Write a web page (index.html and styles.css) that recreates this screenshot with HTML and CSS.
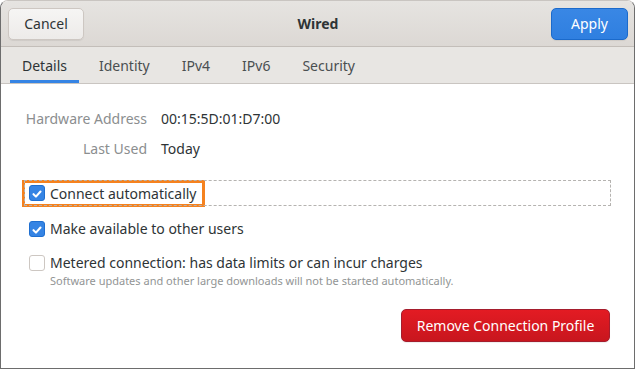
FILE: index.html
```html
<!DOCTYPE html>
<html lang="en">
<head>
  <meta charset="UTF-8" />
  <title>Wired</title>
  <link rel="stylesheet" href="styles.css">
</head>
<body>
  <div class="window">
    <div class="headerbar">
      <button class="btn">Cancel</button>
      <div class="title">Wired</div>
      <button class="btn btn-blue">Apply</button>
    </div>

    <div class="tabs">
      <div class="tab active">Details</div>
      <div class="tab">Identity</div>
      <div class="tab">IPv4</div>
      <div class="tab">IPv6</div>
      <div class="tab">Security</div>
    </div>

    <div class="content">
      <div class="info">
        <div class="info-label">Hardware Address</div>
        <div class="info-value">00:15:5D:01:D7:00</div>
        <div class="info-label">Last Used</div>
        <div class="info-value">Today</div>
      </div>

      <div class="check-row focused">
        <span class="highlight">
          <span class="check on">
            <svg viewBox="0 0 16 16" width="16" height="16"><path d="M4 8.2 L6.8 11 L12 5.2" fill="none" stroke="#fff" stroke-width="2.4" stroke-linecap="round" stroke-linejoin="round"/></svg>
          </span>
          Connect automatically
        </span>
      </div>

      <div class="check-row available">
        <span class="check on">
          <svg viewBox="0 0 16 16" width="16" height="16"><path d="M4 8.2 L6.8 11 L12 5.2" fill="none" stroke="#fff" stroke-width="2.4" stroke-linecap="round" stroke-linejoin="round"/></svg>
        </span>
        Make available to other users
      </div>

      <div class="check-row metered">
        <span class="check"></span>
        <div>
          <div>Metered connection: has data limits or can incur charges</div>
          <div class="hint">Software updates and other large downloads will not be started automatically.</div>
        </div>
      </div>

      <div class="actions">
        <button class="btn btn-red">Remove Connection Profile</button>
      </div>
    </div>
  </div>
</body>
</html>
```

FILE: styles.css
```css
body {
  margin: 0;
  font-family: "Noto Sans", sans-serif;
  font-size: 14px;
  color: #2e3436;
  background: #fff;
}

.window {
  width: 635px;
  height: 369px;
  box-sizing: border-box;
  border: 1px solid #6d6d6d;
  border-top-color: #c9c5c1;
  border-radius: 8px 8px 0 0;
  overflow: hidden;
  background: #fff;
  display: flex;
  flex-direction: column;
}

.headerbar {
  height: 45px;
  display: grid;
  grid-template-columns: 1fr auto 1fr;
  align-items: center;
  padding: 0 6px 0 7px;
  background: linear-gradient(#e6e4e1, #dcd8d4);
  border-bottom: 1px solid #c3beb9;
}

.headerbar .btn-blue {
  justify-self: end;
}

.title {
  font-weight: bold;
  color: #2e3436;
  font-size: 14px;
}

.btn {
  font-family: inherit;
  font-size: 14px;
  height: 32px;
  padding: 0 12px;
  white-space: nowrap;
  border-radius: 5px;
  border: 1px solid #cdc7c2;
  background: linear-gradient(#f6f5f4, #edebe9);
  color: #2e3436;
  box-shadow: 0 1px 1px rgba(0,0,0,0.07);
  justify-self: start;
  width: 76px;
}

.btn-blue {
  width: 77px;
  color: #fff;
  border-color: #1b6acb;
  background: linear-gradient(#3987e5, #2f7fe0);
}

.tabs {
  height: 36px;
  display: flex;
  gap: 8px;
  padding-left: 9px;
  background: #e8e6e3;
  border-bottom: 1px solid #c9c5c1;
}

.tab {
  padding: 0 12px;
  display: flex;
  align-items: center;
  color: #4a4f51;
  border-bottom: 3px solid transparent;
  padding-top: 3px;
}

.tab.active {
  color: #2e3436;
  border-bottom-color: #3584e4;
}

.content {
  flex: 1;
  padding: 25px 24px 0 24px;
}

.info {
  display: grid;
  grid-template-columns: 122px auto;
  column-gap: 14px;
  row-gap: 11px;
  line-height: 19px;
}

.info-label {
  text-align: right;
  color: #8b8e8f;
}

.info-value {
  color: #2e3436;
}

.check-row {
  display: flex;
  align-items: center;
  gap: 5px;
  padding-left: 4px;
  line-height: 19px;
}

.check-row.focused {
  margin-top: 23px;
  height: 24px;
  outline: 1px dashed #b5b3b0;
  outline-offset: 0;
}

.check-row.available {
  margin-top: 14px;
}

.highlight {
  display: flex;
  align-items: center;
  gap: 5px;
  margin-left: -7px;
  padding: 1px 5px 1px 4px;
  border: 3px solid #f5821f;
}

.check {
  width: 16px;
  height: 16px;
  box-sizing: border-box;
  border-radius: 3px;
  border: 1px solid #cdc7c2;
  background: #fff;
  flex-shrink: 0;
  display: flex;
}

.check.on {
  border-color: #1f6fd0;
  background: #3584e4;
}

.metered {
  align-items: flex-start;
  margin-top: 15px;
}

.metered .check {
  margin-top: 2px;
}

.hint {
  font-size: 11px;
  line-height: 14px;
  margin-top: 2px;
  color: #929595;
}

.actions {
  display: flex;
  justify-content: flex-end;
  margin-top: 21px;
}

.btn-red {
  width: 209px;
  height: 33px;
  color: #fff;
  border-color: #a51d2d;
  background: linear-gradient(#e31b23, #c8161e);
}
```
